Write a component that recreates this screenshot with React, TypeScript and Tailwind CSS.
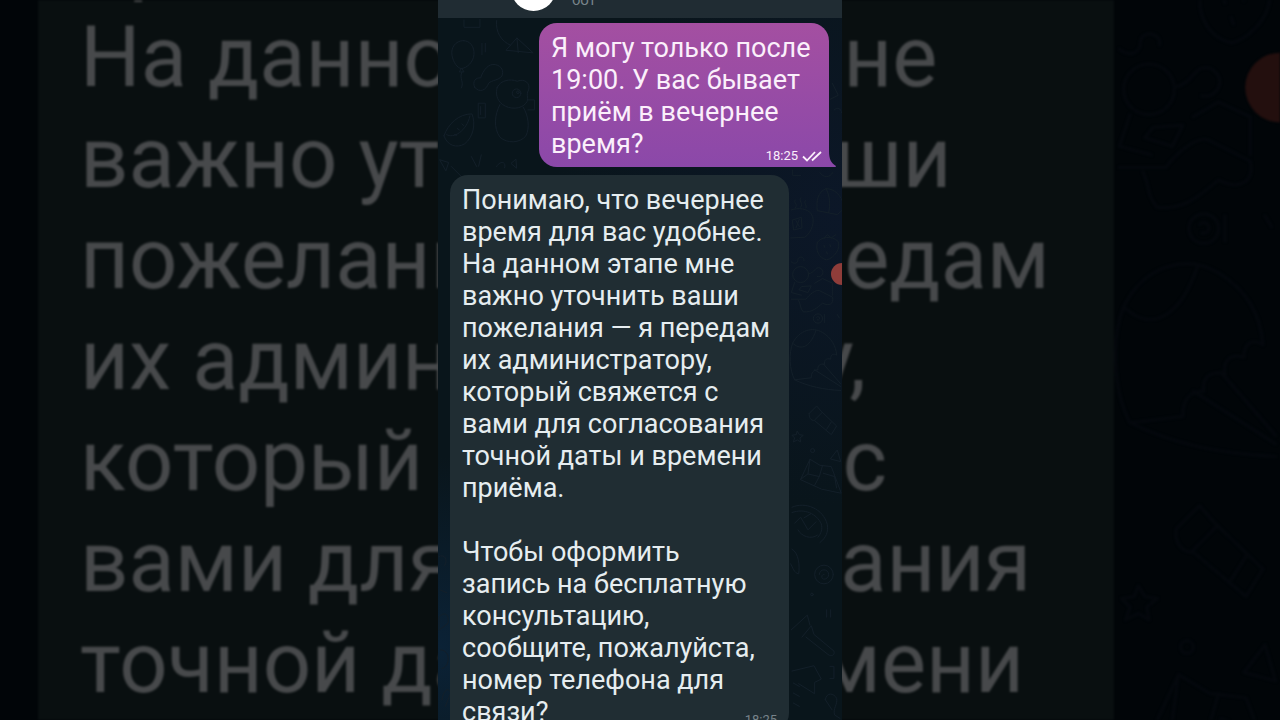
import type { ReactNode } from 'react';

const question = ['Я могу только после', '19:00. У вас бывает', 'приём в вечернее', 'время?'];

const answer = [
  'Понимаю, что вечернее',
  'время для вас удобнее.',
  'На данном этапе мне',
  'важно уточнить ваши',
  'пожелания — я передам',
  'их администратору,',
  'который свяжется с',
  'вами для согласования',
  'точной даты и времени',
  'приёма.',
  '',
  'Чтобы оформить',
  'запись на бесплатную',
  'консультацию,',
  'сообщите, пожалуйста,',
  'номер телефона для',
  'связи?',
];

function Lines({ lines }: { lines: string[] }) {
  return (
    <>
      {lines.map((line, i) => (
        <span key={i} className="block whitespace-nowrap">
          {line || '\u00a0'}
        </span>
      ))}
    </>
  );
}

// Chat wallpaper doodles, the red dot sits on the right edge
function Wallpaper({ className, dot }: { className: string; dot: string }) {
  return (
    <svg
      viewBox="0 0 404 720"
      preserveAspectRatio="xMidYMid slice"
      className={`absolute inset-0 h-full w-full ${className}`}
      fill="none"
      aria-hidden="true"
    >
      <g stroke="currentColor" strokeWidth="3" strokeLinejoin="round" strokeLinecap="round">
        <g transform="scale(.333)">
          <path d="M78 60v22h48V58M176 62c-4 34 14 62 42 74M205 150l32-36 48 44zM237 114l4 44" />
          <path d="M76 122c-24 0-38 22-34 44 4 22 16 38 28 40 18-2 36-20 38-42 2-24-12-42-32-42zM70 206l-6 10h14l-6-10M72 216c-10 20 8 30-2 48" />
          <path d="M132 130v34M142 130v26M110 262c-8-18 4-30 18-28 8-24 24-44 44-40 20 4 26 20 20 34-10 14-30 12-40 22-8 22-28 30-42 12z" />
          <path d="M178 262c10-22 40-26 60-18 24-10 40 8 34 26-10 18 4 26-8 40-14 18-48 20-70 4-18-14-22-34-16-52zM186 314c-16 30-20 70 0 98 22 20 60 18 78-4 12-24 8-60-8-86" />
          <circle cx="236" cy="280" r="13" />
          <circle cx="240" cy="277" r="4" />
          <path d="M122 310h20v44h-20zM128 320v24M270 300h20v30h-20" />
          <path d="M18 408c12-36 44-66 84-66 12 30 4 70-22 90-24 14-52 6-62-24zM26 404c20 14 60-10 70-56M58 386l6 4M72 372l5 5M50 404l6 2" />
          <path d="M6 480l26 8-8 24zM40 500l30 30M100 470l16 30M130 465l-8 34M176 500c10-18 30-16 24 4M220 490l14-12 2 26z" />
          <path d="M1184 250l18 36-24 12M1190 330c10-10 20-4 22 8" />
        </g>
        <g transform="translate(342 170) scale(.333)">
          <path d="M112 122c-4-30 2-56 26-66 26 0 46 20 54 50M112 122l60 12 20-18M138 56c12 20 14 50 8 72M38 0v16h24M120 8c10 16 30 16 38 0" />
          <path d="M34 120c20-8 50-4 60 12 14 20 0 58-20 70l-42 2M38 150l26-8 2 32-24 6zM48 152l10 18M58 148l-10 26M46 90c-8 8 10 12 0 24M62 84c-8 8 10 16 0 28M76 92c-6 8 6 12 2 22" />
          <path d="M112 218c10-18 44-22 62-4 10 20-10 50-34 56-24-6-34-30-28-52zM132 206l10-12 12 10 14-10M132 226l2 6M150 224l2 6M140 246l2 6" />
          <circle cx="62" cy="314" r="24" />
          <path d="M34 276c10 8 20 4 20-8 2-10 20-8 18 4M86 312c20-4 18-22 34-18 18 10 6 30-8 26M44 338l-10 30 30 8M58 360l26 8 10-20-28 2zM34 388h44c10-14 30-30 40-26l40 20c4 20-10 28-30 18-18 14-30 28-58 26-10-10-8-24-14-34M104 340l24-14 30 14v36" />
          <circle cx="114" cy="446" r="14" />
          <path d="M110 442a5 5 0 1 1 2 8M134 434v24M172 434l6 10" />
          <path d="M38 520c20-40 60-50 90-32 26 16 40 40 42 68-10-6-18-2-18 12-14-4-20 4-18 16-14-4-22 4-20 16-14 0-20 8-20 24l-50 6c-16-30-18-80-6-110zM38 520c20 20 50 20 70-38M44 630c40 20 90 30 138 32M104 600l78 50M130 582l52 60" />
        </g>
        <g transform="translate(342 400) scale(.333)">
          <path d="M88 40l22-22 14 16 46 44-16 26-50-42c-12 0-18-10-16-22zM104 60l22-22M140 88l14-22M52 94l6 10 12 2-10 8 2 12-10-6-12 6 4-12-8-8 12-2z" />
          <circle cx="98" cy="152" r="6" />
          <path d="M62 238l28-60 30 18 34 4 30 80-58-12zM90 178l-6 44 34 8 10-34M84 222l-22 16M118 230l-14 26M152 176l20-26 10 34zM130 220l34 10 6 34" />
          <path d="M36 322c40-18 94 4 106 52 4 22-4 40-22 54M36 338c38-14 74 4 88 34 4 16 0 28-10 40M44 370l18-18 22 38 24-24M54 390c10 20 40 30 58 16M72 354l20-12M36 448c20 10 24 50 20 74-14-2-18-20-24-30" />
          <circle cx="132" cy="524" r="28" />
          <path d="M118 524a14 14 0 1 1 14 14c-8 0-10-14 0-14" />
          <circle cx="96" cy="584" r="4" />
          <path d="M34 690l48-44 8 30M66 712l28-34 8 26 60 50c4 12-8 18-18 10l-66-52M140 630v22M152 630v22M36 814l66-16 22 40-20 10v34l-48-30M40 850l18 10M40 880l18 10M40 910l18 10M150 800h12v36h-12M136 900c4-24 26-20 34-4 4 18-12 30-6 50l16 10M136 900l20 30" />
        </g>
        <g transform="translate(0 540) scale(.333)">
          <path d="M2 50c20-10 28 12 18 26M6 150l20 8M4 230c20-20 30 0 26 20l-26 20zM8 330c30 0 30 50 4 56M12 480c4-30 20-40 26-20l-16 40" />
        </g>
      </g>
      <circle cx="404" cy="274" r="11" className={dot} />
    </svg>
  );
}

function SentAt({ className, children }: { className: string; children?: ReactNode }) {
  return (
    <span className={`absolute flex items-center gap-1 text-[13px] leading-4 ${className}`}>
      <time>18:25</time>
      {children}
    </span>
  );
}

function ReadMark() {
  return (
    <svg viewBox="0 0 20 12" className="h-3 w-5" fill="none" stroke="currentColor" strokeWidth="1.8" aria-hidden="true">
      <path d="M1 6.500l4 4L13 2M10 10.500L19 2" />
    </svg>
  );
}

export default function App() {
  return (
    <div className="relative h-screen overflow-hidden bg-[#010508] font-['Roboto',sans-serif]">
      <div className="absolute inset-0 flex items-center overflow-hidden pl-[38px] blur-[1px]" aria-hidden="true">
        <Wallpaper className="text-[#04080d]" dot="fill-[#230f0e]" />
        <div className="relative w-[1076px] shrink-0 bg-[#090f10] pb-[100px] pl-[42px] text-[85px] leading-[101px] text-[#47494b]">
          <Lines lines={answer.slice(1, 9)} />
        </div>
      </div>

      <main className="relative mx-auto flex h-full w-[404px] flex-col overflow-hidden bg-[#09151b] bg-[radial-gradient(circle_at_100%_30%,#0c1728_0%,transparent_45%),radial-gradient(circle_at_0%_90%,#0b2236_0%,transparent_25%)]">
        <Wallpaper className="text-[#131f29]" dot="fill-[#8f3d3a]" />

        <header className="relative flex h-[18px] shrink-0 items-end gap-4 bg-[#202c33] pl-[73px]">
          <span className="mb-[7px] size-[45px] shrink-0 rounded-full bg-white" />
          <span className="mb-[9px] text-[15px] leading-[18px] text-[#77838a]">бот</span>
        </header>

        <section className="relative flex flex-col gap-2 pl-3 pr-[13px] pt-[5px]">
          <article className="relative w-[290px] self-end rounded-[18px] rounded-br-none bg-linear-to-b from-[#a44fa1] to-[#8b48a9] px-3 pb-[7px] pt-[9px] text-[#fbeffb]">
            <p className="text-[27px] leading-8">
              <Lines lines={question} />
            </p>
            <SentAt className="bottom-[3px] right-[7px]">
              <ReadMark />
            </SentAt>
            <svg viewBox="0 0 8 16" className="absolute bottom-0 left-full h-4 w-2 fill-[#8b48a9]" aria-hidden="true">
              <path d="M0 0c0 8 2 12 7 15 0 1-1 1-2 1H0z" />
            </svg>
          </article>

          <article className="relative w-[339px] self-start rounded-t-[18px] rounded-br-[18px] bg-[#202d33] px-3 pb-[3px] pt-[9px] text-[#e6edf0]">
            <p className="text-[27px] leading-8">
              <Lines lines={answer} />
            </p>
            <SentAt className="bottom-[3px] right-3 text-[#77838a]" />
          </article>
        </section>
      </main>
    </div>
  );
}
